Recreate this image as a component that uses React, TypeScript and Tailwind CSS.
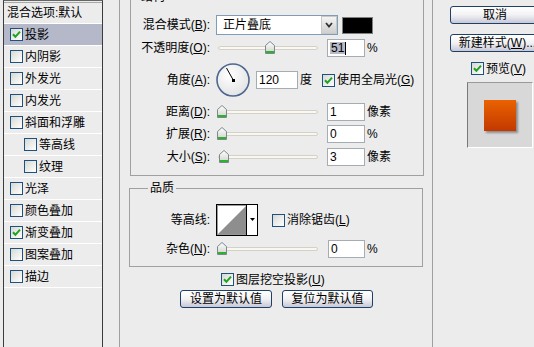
import type { ReactNode } from "react";

function Check({ checked }: { checked?: boolean }) {
	return (
		<span className="flex h-[13px] w-[13px] shrink-0 items-center justify-center border border-[#1c5180] bg-linear-to-br from-[#d8d8d2] to-white">
			{checked && (
				<svg width="9" height="9" viewBox="0 0 9 9">
					<path d="M1 4.2 L3.4 6.8 L8 1.6" stroke="#21a121" strokeWidth="2" fill="none" />
				</svg>
			)}
		</span>
	);
}

function Btn({ children, className }: { children: ReactNode; className: string }) {
	return (
		<button
			className={`flex h-[18px] shrink-0 items-center justify-center rounded-[3px] border border-[#1e3f66] bg-linear-to-b from-white via-[#f2f2f4] to-[#c8c8d8] text-[12px] leading-none text-black ${className}`}
		>
			{children}
		</button>
	);
}

function Field({ children, className }: { children: ReactNode; className: string }) {
	return (
		<div
			className={`flex h-[18px] shrink-0 items-center border border-[#a5acb2] bg-white pl-[2px] ${className}`}
		>
			{children}
		</div>
	);
}

function Slider({ pos }: { pos: number }) {
	return (
		<div className="relative ml-[6px] h-[14px] w-[104px] shrink-0">
			<div className="absolute left-[2px] right-[2px] top-[5px] h-[4px] rounded-full border border-[#d4d1c6] bg-[#f8f7f2]" />
			<svg className="absolute top-0" style={{ left: pos }} width="10" height="13" viewBox="0 0 10 13">
				<defs>
					<linearGradient id="thumb" x1="0" x2="0" y1="0" y2="1">
						<stop offset="0" stopColor="#ffffff" />
						<stop offset="1" stopColor="#cfd0cc" />
					</linearGradient>
				</defs>
				<path d="M5 0.5 L9.5 4.5 V12.5 H0.5 V4.5 Z" fill="url(#thumb)" stroke="#7a8a8c" />
				<rect x="1" y="10" width="8" height="2" fill="#2db22d" />
			</svg>
		</div>
	);
}

function Label({ children, w }: { children: ReactNode; w: "a" | "b" }) {
	return (
		<span className={`${w === "a" ? "w-[79px]" : "w-[80px]"} shrink-0 whitespace-nowrap text-right`}>
			{children}
		</span>
	);
}

function ListRow({
	text,
	checked,
	selected,
	sub
}: {
	text: string;
	checked?: boolean;
	selected?: boolean;
	sub?: boolean;
}) {
	return (
		<div
			className={`flex h-[22px] shrink-0 items-center border-b border-white ${sub ? "pl-[20px]" : "pl-[6px]"} ${selected ? "bg-[#b4b8c8]" : ""}`}
		>
			<Check checked={checked} />
			<span className="ml-[2px]">{text}</span>
		</div>
	);
}

function Dial() {
	return (
		<svg className="ml-[6px] shrink-0" width="34" height="34" viewBox="0 0 34 34">
			<defs>
				<radialGradient id="dial" cx="0.4" cy="0.35" r="0.7">
					<stop offset="0" stopColor="#ffffff" />
					<stop offset="1" stopColor="#e2e2e2" />
				</radialGradient>
			</defs>
			<circle cx="17" cy="17" r="16" fill="url(#dial)" stroke="#4d6791" strokeWidth="1.6" />
			<line x1="17.5" y1="17.5" x2="10.5" y2="5" stroke="#000" strokeWidth="1" />
			<rect x="16" y="16" width="3" height="3" fill="#000" />
		</svg>
	);
}

function Contour() {
	return (
		<svg className="ml-[6px] shrink-0" width="42" height="32" viewBox="0 0 42 32">
			<rect x="0.5" y="0.5" width="41" height="31" fill="#fff" stroke="#000" />
			<rect x="1.5" y="1.5" width="29" height="29" fill="#fff" stroke="#9a9a9a" />
			<polygon points="2,30 30,2 30,30" fill="#8e8e8e" />
			<line x1="30.5" y1="1" x2="30.5" y2="31" stroke="#000" />
			<polygon points="34,14 39,14 36.5,17" fill="#000" />
		</svg>
	);
}

export default function App() {
	return (
		<div className="flex h-[347px] w-[534px] overflow-hidden bg-[#ececec] font-['Liberation_Sans','Noto_Sans_CJK_SC',sans-serif] text-[12px] leading-none text-black">
			{/* style list */}
			<div className="ml-[3px] flex w-[100px] shrink-0 flex-col border-x border-t border-x-[#3c3c3c] border-t-[#666] pt-[1px]">
				<div className="h-[1px] shrink-0 bg-[#a8a8a8]" />
				<div className="flex h-[21px] shrink-0 items-center border-b border-white pl-[3px]">混合选项:默认</div>
				<ListRow text="投影" checked selected />
				<ListRow text="内阴影" />
				<ListRow text="外发光" />
				<ListRow text="内发光" />
				<ListRow text="斜面和浮雕" />
				<ListRow text="等高线" sub />
				<ListRow text="纹理" sub />
				<ListRow text="光泽" />
				<ListRow text="颜色叠加" />
				<ListRow text="渐变叠加" checked />
				<ListRow text="图案叠加" />
				<ListRow text="描边" />
			</div>

			{/* drop shadow settings */}
			<div className="ml-[16px] flex w-[314px] shrink-0 flex-col border-x border-[#a0a0a0]">
				<div className="relative -mt-[3px] ml-[10px] flex h-[179px] w-[294px] shrink-0 flex-col border border-[#a0a0a0]">
					<span className="absolute -top-[7px] left-[8px] bg-[#ececec] px-[2px]">结构</span>
					<div className="mt-[16px] flex h-[22px] items-center">
						<Label w="a">
							混合模式(<u>B</u>):
						</Label>
						<div className="ml-[6px] flex h-[20px] w-[122px] shrink-0 border border-[#7f9db9] bg-white">
							<span className="flex flex-1 items-center pl-[6px]">正片叠底</span>
							<span className="flex w-[16px] items-center justify-center border border-[#c8c8c8] bg-linear-to-b from-[#f4f4f4] to-[#cfcfcf]">
								<svg width="8" height="6" viewBox="0 0 8 6">
									<path d="M1 1 L4 4.5 L7 1" stroke="#333" strokeWidth="1.8" fill="none" />
								</svg>
							</span>
						</div>
						<div className="ml-[4px] h-[17px] w-[31px] shrink-0 border border-[#808080] bg-black" />
					</div>
					<div className="mt-[1px] flex h-[22px] items-center">
						<Label w="a">
							不透明度(<u>O</u>):
						</Label>
						<Slider pos={49} />
						<Field className="ml-[7px] w-[38px]">
							<span className="bg-[#b6bac6] px-[1px]">51</span>
							<span className="h-[13px] w-[1px] bg-black" />
						</Field>
						<span className="ml-[2px]">%</span>
					</div>
					<div className="mt-[3px] flex h-[36px] items-center">
						<Label w="a">
							角度(<u>A</u>):
						</Label>
						<Dial />
						<Field className="ml-[6px] w-[42px]">120</Field>
						<span className="ml-[2px]">度</span>
						<span className="ml-[10px]">
							<Check checked />
						</span>
						<span className="ml-[2px] whitespace-nowrap">
							使用全局光(<u>G</u>)
						</span>
					</div>
					<div className="mt-[3px] flex h-[22px] items-center">
						<Label w="a">
							距离(<u>D</u>):
						</Label>
						<Slider pos={1} />
						<Field className="ml-[7px] w-[38px]">1</Field>
						<span className="ml-[2px]">像素</span>
					</div>
					<div className="flex h-[22px] items-center">
						<Label w="a">
							扩展(<u>R</u>):
						</Label>
						<Slider pos={1} />
						<Field className="ml-[7px] w-[38px]">0</Field>
						<span className="ml-[2px]">%</span>
					</div>
					<div className="mt-[1px] flex h-[22px] items-center">
						<Label w="a">
							大小(<u>S</u>):
						</Label>
						<Slider pos={3} />
						<Field className="ml-[7px] w-[38px]">3</Field>
						<span className="ml-[2px]">像素</span>
					</div>
				</div>

				<div className="relative mt-[12px] ml-[9px] flex h-[79px] w-[294px] shrink-0 flex-col border border-[#a0a0a0]">
					<span className="absolute -top-[7px] left-[18px] bg-[#ececec] px-[2px]">品质</span>
					<div className="mt-[15px] flex h-[32px] items-center">
						<Label w="b">等高线:</Label>
						<Contour />
						<span className="ml-[14px]">
							<Check />
						</span>
						<span className="ml-[2px] whitespace-nowrap">
							消除锯齿(<u>L</u>)
						</span>
					</div>
					<div className="mt-[3px] flex h-[20px] items-center">
						<Label w="b">
							杂色(<u>N</u>):
						</Label>
						<Slider pos={1} />
						<Field className="ml-[8px] w-[37px]">0</Field>
						<span className="ml-[2px]">%</span>
					</div>
				</div>

				<div className="mt-[6px] ml-[101px] flex h-[13px] items-center">
					<Check checked />
					<span className="ml-[2px] whitespace-nowrap">
						图层挖空投影(<u>U</u>)
					</span>
				</div>
				<div className="mt-[4px] ml-[60px] flex gap-[10px]">
					<Btn className="w-[92px]">设置为默认值</Btn>
					<Btn className="w-[91px]">复位为默认值</Btn>
				</div>
			</div>

			{/* buttons + preview */}
			<div className="ml-[17px] flex w-[84px] shrink-0 flex-col">
				<Btn className="mt-[6px] w-[90px]">取消</Btn>
				<Btn className="mt-[10px] w-[95px] whitespace-nowrap">
					新建样式(<u>W</u>)...
				</Btn>
				<div className="mt-[10px] ml-[21px] flex h-[13px] items-center">
					<Check checked />
					<span className="ml-[2px] whitespace-nowrap">
						预览(<u>V</u>)
					</span>
				</div>
				<div className="mt-[7px] ml-[17px] flex h-[66px] w-[66px] shrink-0 items-center justify-center border border-b-white border-l-[#7a7a7a] border-r-white border-t-[#9a9a9a] bg-[#d8d8d8]">
					<div className="h-[31px] w-[32px] bg-linear-to-b from-[#ea6200] to-[#c23800] shadow-[2px_2px_2px_rgba(0,0,0,0.35)]" />
				</div>
			</div>
		</div>
	);
}
